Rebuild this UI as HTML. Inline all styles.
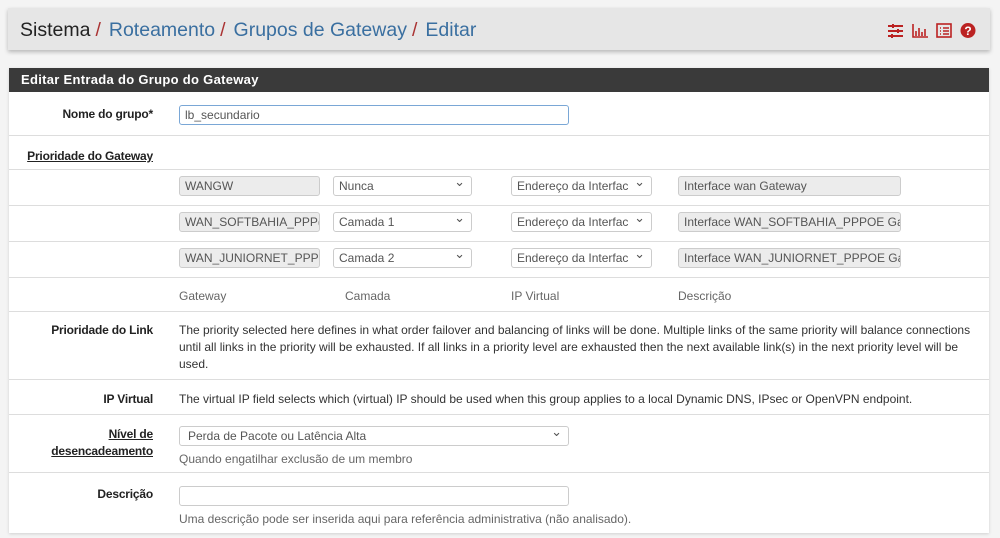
<!DOCTYPE html>
<html><head><meta charset="utf-8"><style>
*{box-sizing:border-box;margin:0;padding:0}
body{width:1000px;height:538px;overflow:hidden;background:#f4f4f4;font-family:"Liberation Sans",sans-serif;font-size:12px;color:#222;position:relative}
.a{position:absolute}
.bc{left:8px;top:8px;width:982px;height:42px;background:#e6e6e6;box-shadow:0 2px 4px rgba(0,0,0,.25);font-size:19.5px;line-height:44px;padding-left:12px;color:#222}
.bc .s{color:#a33;margin:0 8px 0 5px}
.bc .l{color:#3a6fa0}
.panel{left:9px;top:68px;width:980px;height:465px;background:#fff;box-shadow:0 1px 3px rgba(0,0,0,.15)}
.hd{left:9px;top:68px;width:980px;height:24px;background:#3a3a3a;color:#fff;font-weight:bold;font-size:13px;line-height:24px;padding-left:12px;letter-spacing:.3px}
.hr{left:9px;width:980px;height:1px;background:#ddd}
.lb{right:847px;font-weight:bold;text-align:right;line-height:17px;letter-spacing:-.2px}
.u{text-decoration:underline}
.in{height:20px;border:1px solid #ccc;border-radius:3px;background:#fff;line-height:18px;padding-left:5px;color:#555;white-space:nowrap;overflow:hidden}
.ro{background:#ececec}
.sel::after{content:"⌄";position:absolute;right:6px;top:-4px;font-size:13px;color:#555}
.t{line-height:17px;color:#333}
.h{color:#666}
</style></head><body>
<div class="a bc">Sistema<span class="s">/</span><span class="l">Roteamento</span><span class="s">/</span><span class="l">Grupos de Gateway</span><span class="s">/</span><span class="l">Editar</span></div>
<svg class="a" style="left:887px;top:22px" width="90" height="18" viewBox="0 0 90 18">
<g stroke="#b22" stroke-width="2" fill="none"><path d="M1 4h15M1 9h15M1 14h15"/><path d="M6 2v4M11 7v4M5 12v4"/>
<path d="M26 2v13h15M29 9v5M32 6v8M35 10v4M38 7v7" stroke-width="1.6"/>
<rect x="50" y="2" width="14" height="13" stroke-width="1.6"/><path d="M53 6h1M56 6h6M53 9h1M56 9h6M53 12h1M56 12h6" stroke-width="1.4"/></g>
<circle cx="81" cy="8.5" r="7.5" fill="#b22"/><text x="81" y="13" fill="#fff" font-size="12" font-weight="bold" text-anchor="middle" font-family="Liberation Sans">?</text></svg>
<div class="a panel"></div>
<div class="a hd">Editar Entrada do Grupo do Gateway</div>
<div class="a lb" style="top:106px">Nome do grupo*</div>
<div class="a in" style="left:179px;top:105px;width:390px;border-color:#7aa7d6">lb_secundario</div>
<div class="a hr" style="top:135px"></div>
<div class="a lb u" style="top:148px">Prioridade do Gateway</div>
<div class="a hr" style="top:169px"></div>
<div class="a in ro" style="left:179px;top:176px;width:141px">WANGW</div>
<div class="a in sel" style="left:333px;top:176px;width:139px">Nunca</div>
<div class="a in sel" style="left:511px;top:176px;width:141px">Endereço da Interfac</div>
<div class="a in ro" style="left:678px;top:176px;width:223px">Interface wan Gateway</div>
<div class="a hr" style="top:205px"></div>
<div class="a in ro" style="left:179px;top:212px;width:141px">WAN_SOFTBAHIA_PPP(</div>
<div class="a in sel" style="left:333px;top:212px;width:139px">Camada 1</div>
<div class="a in sel" style="left:511px;top:212px;width:141px">Endereço da Interfac</div>
<div class="a in ro" style="left:678px;top:212px;width:223px">Interface WAN_SOFTBAHIA_PPPOE Gat</div>
<div class="a hr" style="top:241px"></div>
<div class="a in ro" style="left:179px;top:248px;width:141px">WAN_JUNIORNET_PPP(</div>
<div class="a in sel" style="left:333px;top:248px;width:139px">Camada 2</div>
<div class="a in sel" style="left:511px;top:248px;width:141px">Endereço da Interfac</div>
<div class="a in ro" style="left:678px;top:248px;width:223px">Interface WAN_JUNIORNET_PPPOE Gat</div>
<div class="a hr" style="top:277px"></div>
<div class="a h" style="left:179px;top:289px">Gateway</div>
<div class="a h" style="left:345px;top:289px">Camada</div>
<div class="a h" style="left:511px;top:289px">IP Virtual</div>
<div class="a h" style="left:678px;top:289px">Descrição</div>
<div class="a hr" style="top:311px"></div>
<div class="a lb" style="top:322px">Prioridade do Link</div>
<div class="a t" style="left:179px;top:322px;width:800px">The priority selected here defines in what order failover and balancing of links will be done. Multiple links of the same priority will balance connections until all links in the priority will be exhausted. If all links in a priority level are exhausted then the next available link(s) in the next priority level will be used.</div>
<div class="a hr" style="top:379px"></div>
<div class="a lb" style="top:391px">IP Virtual</div>
<div class="a t" style="left:179px;top:391px">The virtual IP field selects which (virtual) IP should be used when this group applies to a local Dynamic DNS, IPsec or OpenVPN endpoint.</div>
<div class="a hr" style="top:414px"></div>
<div class="a lb u" style="top:426px">Nível de<br>desencadeamento</div>
<div class="a in sel" style="left:179px;top:426px;width:390px;padding-left:8px">Perda de Pacote ou Latência Alta</div>
<div class="a h" style="left:179px;top:452px">Quando engatilhar exclusão de um membro</div>
<div class="a hr" style="top:472px"></div>
<div class="a lb" style="top:486px">Descrição</div>
<div class="a in" style="left:179px;top:486px;width:390px"></div>
<div class="a h" style="left:179px;top:512px">Uma descrição pode ser inserida aqui para referência administrativa (não analisado).</div>
</body></html>
